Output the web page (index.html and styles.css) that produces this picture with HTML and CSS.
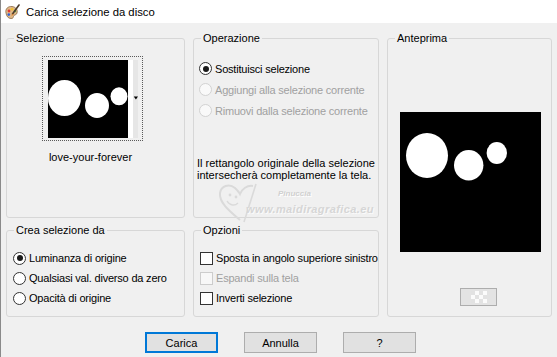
FILE: index.html
```html
<!DOCTYPE html>
<html lang="it">
<head>
    <meta charset="UTF-8">
    <title>Carica selezione da disco</title>
    <link rel="stylesheet" href="styles.css">
</head>
<body>
<div class="window">

    <div class="titlebar">
        <svg class="app-icon" width="16" height="16" viewBox="0 0 16 16">
            <path d="M2 9 C1 5 4 2 8 2.5 C12 3 14 6 13 9 C12.5 11 11 10.5 10 11.5 C9 12.5 10 14.5 7 14.5 C4 14.5 2.5 12 2 9 Z" fill="#dfb98a" stroke="#8c6a45" stroke-width="0.8"/>
            <circle cx="5" cy="7" r="1.4" fill="#e23b2e"/>
            <circle cx="8" cy="5.2" r="1.3" fill="#f2c12e"/>
            <circle cx="4.8" cy="10.6" r="1.3" fill="#2f62d6"/>
            <circle cx="11" cy="7" r="1.2" fill="#3aa547"/>
            <path d="M15 1 L8.5 10" stroke="#4a3a2a" stroke-width="1.6" stroke-linecap="round"/>
            <path d="M8.8 9.4 L7.2 12.2 L9.6 10.6 Z" fill="#e8842a"/>
        </svg>
        <span class="title">Carica selezione da disco</span>
    </div>

    <div class="panes">

        <fieldset class="group">
            <legend>Selezione</legend>
            <div class="thumb">
                <svg width="90" height="78" viewBox="0 0 90 78">
                    <rect x="0" y="0" width="80" height="78" fill="#000"/>
                    <ellipse cx="16.5" cy="38" rx="16.5" ry="18" fill="#fff"/>
                    <ellipse cx="49" cy="45.5" rx="12" ry="12.5" fill="#fff"/>
                    <ellipse cx="71" cy="36.3" rx="8.5" ry="9" fill="#fff"/>
                    <rect x="80" y="0" width="5" height="78" fill="#fff"/>
                    <rect x="85" y="0" width="5" height="78" fill="#e6e6e6"/>
                    <path d="M85.8 36.5 L90 36.5 L87.9 39.5 Z" fill="#000"/>
                </svg>
            </div>
            <div class="thumb-name">love-your-forever</div>
        </fieldset>

        <fieldset class="group op-group">
            <legend>Operazione</legend>
            <div class="options op-options">
                <div class="opt"><span class="radio checked"></span>Sostituisci selezione</div>
                <div class="opt disabled"><span class="radio"></span>Aggiungi alla selezione corrente</div>
                <div class="opt disabled"><span class="radio"></span>Rimuovi dalla selezione corrente</div>
            </div>
            <p class="note">Il rettangolo originale della selezione<br>intersecherà completamente la tela.</p>

            <div class="watermark">
                <svg class="wm-heart" width="48" height="44" viewBox="0 0 48 44">
                    <path d="M24 40 C12 30 3 22 4 13 C5 6 13 3 19 8 C21 10 23 12 24 14 C26 9 31 5 37 6" fill="none" stroke="#dadada" stroke-width="2"/>
                    <path d="M40 4 L28 42" fill="none" stroke="#dadada" stroke-width="1.6"/>
                    <circle cx="14" cy="15" r="1.4" fill="#dadada"/>
                    <circle cx="20" cy="17" r="1.4" fill="#dadada"/>
                    <path d="M11 21 C14 26 19 26 22 23" fill="none" stroke="#dadada" stroke-width="1.4"/>
                </svg>
                <span class="wm-name">Pinuccia</span>
                <span class="wm-url">www.maidiragrafica.eu</span>
            </div>
        </fieldset>

        <fieldset class="group preview-group">
            <legend>Anteprima</legend>
            <svg class="preview" width="141" height="140" viewBox="0 0 141 140">
                <rect x="0" y="0" width="141" height="140" fill="#000"/>
                <ellipse cx="27" cy="43.5" rx="21" ry="22.5" fill="#fff"/>
                <ellipse cx="68.7" cy="53.3" rx="14.7" ry="15.3" fill="#fff"/>
                <ellipse cx="96.8" cy="41" rx="10.2" ry="11" fill="#fff"/>
            </svg>
            <div class="bg-button"><span class="checker"></span></div>
        </fieldset>

        <fieldset class="group">
            <legend>Crea selezione da</legend>
            <div class="options">
                <div class="opt"><span class="radio checked"></span>Luminanza di origine</div>
                <div class="opt"><span class="radio"></span>Qualsiasi val. diverso da zero</div>
                <div class="opt"><span class="radio"></span>Opacità di origine</div>
            </div>
        </fieldset>

        <fieldset class="group">
            <legend>Opzioni</legend>
            <div class="options">
                <div class="opt"><span class="check"></span>Sposta in angolo superiore sinistro</div>
                <div class="opt disabled"><span class="check"></span>Espandi sulla tela</div>
                <div class="opt"><span class="check"></span>Inverti selezione</div>
            </div>
        </fieldset>

    </div>

    <div class="actions">
        <button class="default">Carica</button>
        <button>Annulla</button>
        <button>?</button>
    </div>

</div>
</body>
</html>
```

FILE: styles.css
```css
body {
    margin: 0;
    background-color: #f0f0f0;
    font-family: "Liberation Sans", Arial, sans-serif;
    font-size: 11px;
    color: #000;
}
.window {
    width: 557px;
    height: 357px;
    box-sizing: border-box;
    border-left: 1px solid #8a8a8a;
    background-color: #f0f0f0;
    overflow: hidden;
}
.titlebar {
    height: 23px;
    display: flex;
    align-items: center;
    gap: 6px;
    padding-left: 3px;
    background-color: #fff;
}
.app-icon {
    display: block;
}
.title {
    font-size: 11.3px;
    color: #000;
}
.panes {
    display: grid;
    grid-template-columns: 179px 186px 165px;
    grid-template-rows: 186px 93px;
    column-gap: 8px;
    row-gap: 6px;
    padding: 9px 0 0 5px;
}
.group {
    margin: 0;
    padding: 0;
    min-width: 0;
    border: 1px solid #d7d7d7;
    border-radius: 3px;
}
.group legend {
    margin-left: 7px;
    padding: 0 2px;
    line-height: 13px;
}
.preview-group {
    grid-column: 3;
    grid-row: 1 / span 2;
}
.thumb {
    width: 90px;
    height: 78px;
    margin: 11px 0 0 35px;
    padding: 3px 4px 2px 5px;
    border: 1px dotted #5a5a5a;
}
.thumb svg {
    display: block;
}
.thumb-name {
    width: 97px;
    margin: 10px 0 0 35px;
    text-align: center;
    line-height: 13px;
}
.op-group {
    position: relative;
}
.options {
    margin-top: 11px;
    padding-left: 6px;
}
.op-options {
    margin-top: 13px;
    padding-left: 5px;
}
.opt {
    display: flex;
    align-items: center;
    gap: 3px;
    height: 20px;
    white-space: nowrap;
    letter-spacing: -0.2px;
}
.op-options .opt {
    height: 21px;
}
.opt.disabled {
    color: #a0a0a0;
}
.radio {
    flex: none;
    width: 11px;
    height: 11px;
    border: 1px solid #333;
    border-radius: 50%;
    background-color: #fff;
    display: flex;
    align-items: center;
    justify-content: center;
}
.radio.checked::after {
    content: "";
    width: 6px;
    height: 6px;
    border-radius: 50%;
    background-color: #1a1a1a;
}
.disabled .radio {
    border-color: #d2d2d2;
    background-color: #f9f9f9;
}
.check {
    flex: none;
    width: 11px;
    height: 11px;
    border: 1px solid #333;
    background-color: #fff;
}
.disabled .check {
    border-color: #cccccc;
    background-color: #f7f7f7;
}
.note {
    margin: 36px 0 0 3px;
    line-height: 12px;
}
.watermark {
    position: absolute;
    left: 22px;
    top: 135px;
    width: 160px;
    height: 44px;
    pointer-events: none;
}
.wm-heart {
    position: absolute;
    left: 0;
    top: 0;
}
.wm-name {
    position: absolute;
    left: 62px;
    top: 9px;
    font-size: 8px;
    font-style: italic;
    font-weight: bold;
    color: #d0d0d0;
    text-shadow: 1px 1px 0 #fff;
}
.wm-url {
    position: absolute;
    left: 30px;
    top: 23px;
    font-size: 11px;
    font-style: italic;
    font-weight: bold;
    letter-spacing: 0.4px;
    color: #d6d6d6;
    text-shadow: 1px 1px 0 #fafafa;
}
.preview {
    display: block;
    margin: 67px 0 0 12px;
}
.bg-button {
    width: 35px;
    height: 16px;
    margin: 36px 0 0 72px;
    border: 1px solid #adadad;
    background-color: #e3e3e3;
    display: flex;
    align-items: center;
    justify-content: center;
}
.checker {
    width: 16px;
    height: 12px;
    background-color: #e8e8e8;
    background-image: conic-gradient(#fbfbfb 25%, #e2e2e2 0 50%, #fbfbfb 0 75%, #e2e2e2 0);
    background-size: 8px 8px;
}
.actions {
    display: flex;
    gap: 26px;
    margin-top: 15px;
    padding-left: 144px;
}
button {
    width: 73px;
    height: 21px;
    padding: 0;
    background-color: #e1e1e1;
    border: 1px solid #adadad;
    font-family: "Liberation Sans", Arial, sans-serif;
    font-size: 11px;
    color: #000;
}
button.default {
    border-color: #0078d7;
    box-shadow: inset 0 0 0 1px #0078d7;
}
```
